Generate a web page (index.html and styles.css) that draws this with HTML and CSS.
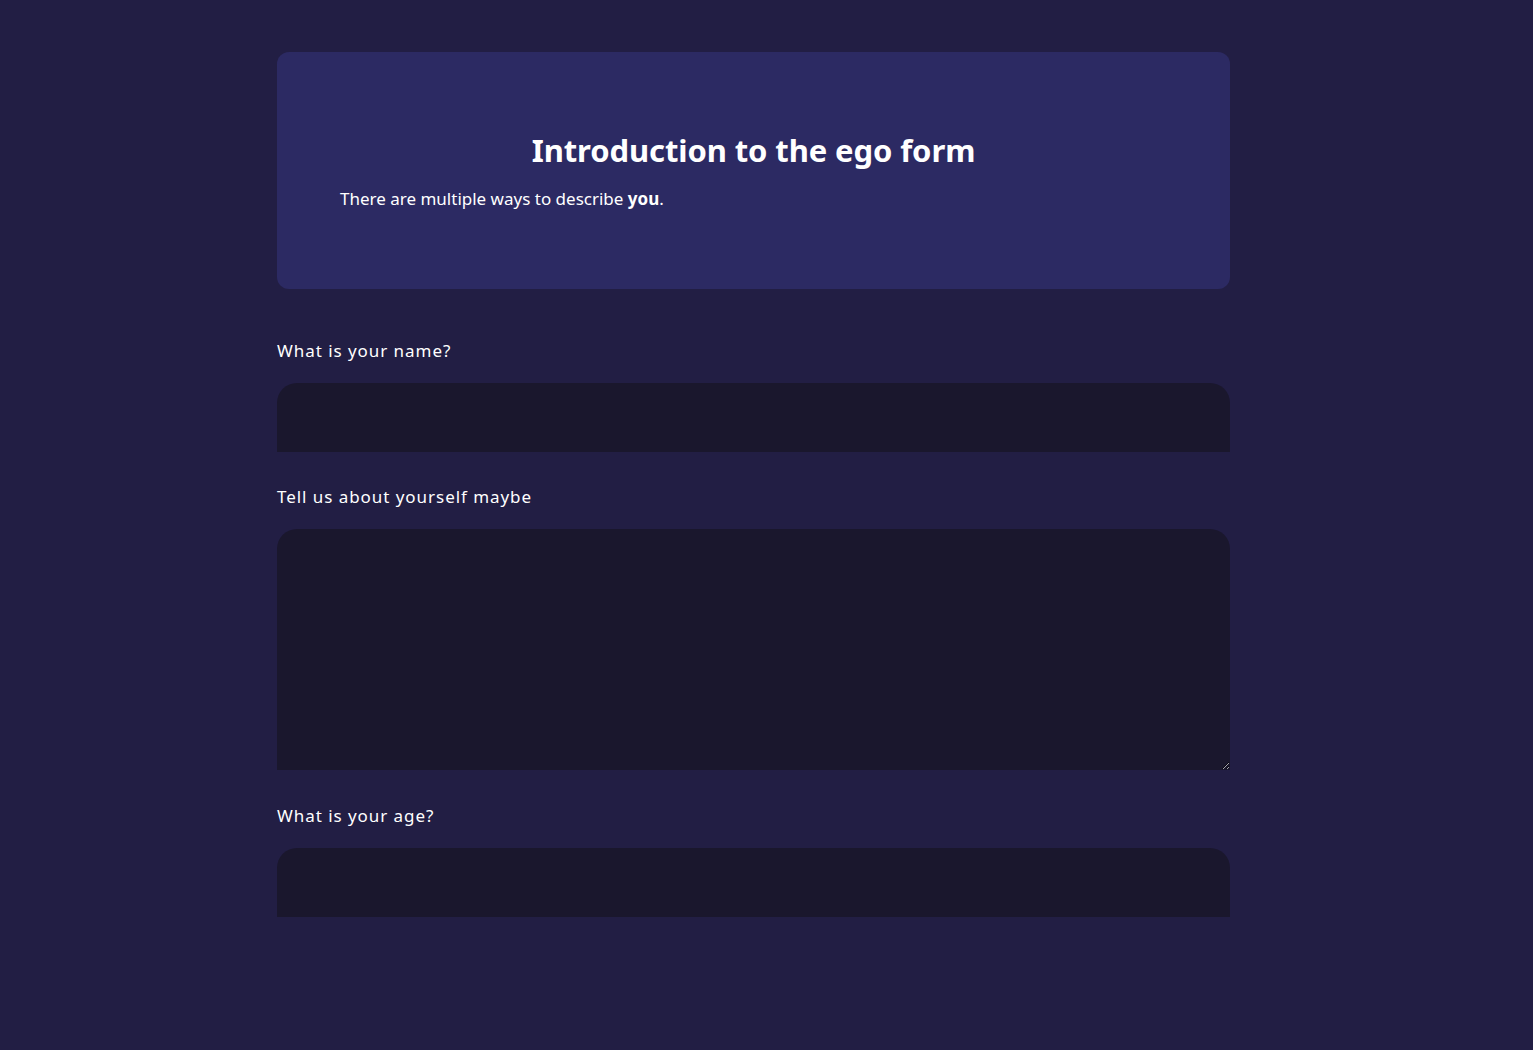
FILE: index.html
```html
<!DOCTYPE html>
<html lang="en">
<head>
<meta charset="utf-8">
<title>Ego form</title>
<link rel="stylesheet" href="styles.css">
</head>
<body>
<main class="page">
  <section class="intro">
    <h1 class="intro-title">Introduction to the ego form</h1>
    <p class="intro-text">There are multiple ways to describe <strong>you</strong>.</p>
  </section>
  <form class="form">
    <label class="field">
      <span class="field-label">What is your name?</span>
      <input class="field-input" type="text">
    </label>
    <label class="field">
      <span class="field-label">Tell us about yourself maybe</span>
      <textarea class="field-textarea"></textarea>
    </label>
    <label class="field">
      <span class="field-label">What is your age?</span>
      <input class="field-input" type="text">
    </label>
  </form>
</main>
</body>
</html>
```
FILE: styles.css
```css
html, body {
  margin: 0;
  padding: 0;
  background: #221e44;
  min-height: 100%;
}
body {
  font-family: "Noto Sans", "Open Sans", sans-serif;
  color: #ffffff;
  height: 1050px;
}
.page {
  width: 953px;
  margin: 0 0 0 277px;
  padding-top: 52px;
}
.intro {
  background: #2c2a63;
  border-radius: 12px;
  height: 237px;
  box-sizing: border-box;
  padding: 78px 63px 0;
}
.intro-title {
  margin: 0;
  text-align: center;
  font-size: 31px;
  font-weight: 700;
  letter-spacing: -0.1px;
  line-height: 40px;
}
.intro-text {
  margin: 17px 0 0;
  font-size: 17px;
  line-height: 24px;
}
.intro-text strong {
  font-weight: 700;
}
.form {
  display: flex;
  flex-direction: column;
  margin-top: 50px;
}
.field {
  display: flex;
  flex-direction: column;
}
.field-label {
  font-size: 17px;
  line-height: 24px;
  letter-spacing: 0.95px;
  margin-bottom: 20px;
}
.field-input,
.field-textarea {
  display: block;
  box-sizing: border-box;
  width: 100%;
  border: none;
  outline: none;
  background: #1a172d;
  color: #ffffff;
  border-radius: 20px 20px 0 0;
  margin: 0 0 33px;
  font: inherit;
}
.field-input {
  height: 69px;
  padding: 0 20px;
}
.field-textarea {
  height: 241px;
  padding: 20px;
  resize: vertical;
  margin-bottom: 34px;
}
```
